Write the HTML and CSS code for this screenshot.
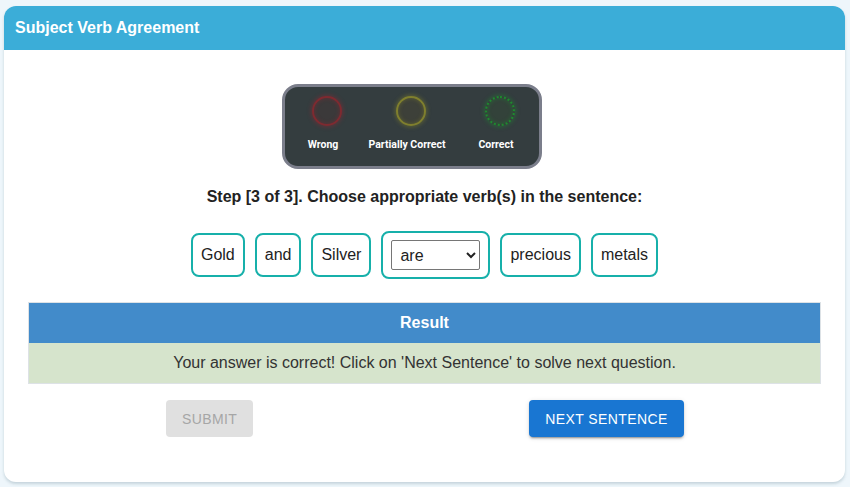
FILE: index.html
```html
<!DOCTYPE html>
<html>
<head>
<meta charset="utf-8">
<link rel="stylesheet" href="styles.css">
</head>
<body>
<div class="card">
  <div class="card-header">Subject Verb Agreement</div>
  <div class="card-body">
    <div class="lights">
      <div class="light-col col-wrong">
        <span class="lamp lamp-red"></span>
        <span class="lamp-label">Wrong</span>
      </div>
      <div class="light-col col-partial">
        <span class="lamp lamp-yellow"></span>
        <span class="lamp-label">Partially Correct</span>
      </div>
      <div class="light-col col-correct">
        <span class="lamp lamp-green"></span>
        <span class="lamp-label">Correct</span>
      </div>
    </div>
    <div class="step">Step [3 of 3]. Choose appropriate verb(s) in the sentence:</div>
    <div class="words">
      <span class="word">Gold</span>
      <span class="word">and</span>
      <span class="word">Silver</span>
      <span class="word word-select">
        <select class="verb">
          <option>are</option>
          <option>is</option>
        </select>
      </span>
      <span class="word">precious</span>
      <span class="word">metals</span>
    </div>
    <div class="result">
      <div class="result-head">Result</div>
      <div class="result-row">Your answer is correct! Click on 'Next Sentence' to solve next question.</div>
    </div>
    <div class="actions">
      <button class="btn btn-disabled" disabled>Submit</button>
      <button class="btn btn-primary">Next Sentence</button>
    </div>
  </div>
</div>
</body>
</html>
```

FILE: styles.css
```css
html, body {
  margin: 0;
  padding: 0;
}
body {
  background: #eef6fb;
  font-family: "Liberation Sans", Arial, sans-serif;
  width: 850px;
  height: 487px;
  overflow: hidden;
}
.card {
  margin: 6px 5px 0 4px;
  height: 476px;
  background: #fff;
  border-radius: 12px;
  box-shadow: 0 2px 3px rgba(120, 150, 160, 0.35);
  overflow: hidden;
  display: flex;
  flex-direction: column;
}
.card-header {
  height: 44px;
  background: #3badd8;
  color: #fff;
  font-weight: bold;
  font-size: 16px;
  line-height: 44px;
  padding-left: 11px;
}
.card-body {
  display: flex;
  flex-direction: column;
  align-items: center;
}
.lights {
  margin-top: 34px;
  align-self: flex-start;
  margin-left: 278px;
  width: 254px;
  height: 79px;
  background: #343d3f;
  border: 3px solid #7b7e8b;
  border-radius: 16px;
  display: flex;
  box-sizing: content-box;
}
.light-col {
  display: flex;
  flex-direction: column;
  align-items: center;
}
.col-wrong { width: 76px; }
.col-partial { width: 92px; }
.col-correct { width: 86px; }
.lamp {
  margin-top: 9px;
  width: 26px;
  height: 26px;
  border-radius: 50%;
  border: 2px solid;
  position: relative;
  left: 4px;
}
.lamp-red {
  border-color: #7e2a30;
  background: #3b393a;
  box-shadow: 0 0 4px 1px rgba(150, 40, 50, 0.45), inset 0 0 4px rgba(150, 40, 50, 0.45);
}
.lamp-yellow {
  border-color: #7f7f2e;
  background: #3d4039;
  box-shadow: 0 0 4px 1px rgba(140, 140, 40, 0.45), inset 0 0 4px rgba(140, 140, 40, 0.45);
}
.lamp-green {
  border-color: #1e8a2e;
  border-style: dotted;
  background: #33423a;
  box-shadow: 0 0 4px 1px rgba(30, 140, 50, 0.45), inset 0 0 4px rgba(30, 140, 50, 0.45);
}
.lamp-label {
  margin-top: 12px;
  color: #fff;
  font-family: Roboto, "Liberation Sans", sans-serif;
  font-weight: bold;
  font-size: 10.5px;
  line-height: 13px;
}
.step {
  margin-top: 19px;
  font-weight: bold;
  font-size: 16px;
  line-height: 18px;
  color: #222;
}
.words {
  margin-top: 25px;
  display: flex;
  align-items: center;
  gap: 10px;
  height: 48px;
}
.word {
  border: 2px solid #17b0aa;
  border-radius: 8px;
  padding: 11px 8px;
  font-size: 16px;
  line-height: 18px;
  color: #222;
}
.word-select {
  padding: 7px 8px;
  display: flex;
}
.verb {
  width: 89px;
  height: 30px;
  font-family: "Liberation Sans", Arial, sans-serif;
  font-size: 16px;
  color: #222;
  background: #fff;
  border: 1px solid #767676;
  border-radius: 2px;
  padding: 0 4px;
}
.result {
  margin-top: 23px;
  width: 791px;
  border: 1px solid #dde2e6;
}
.result-head {
  height: 40px;
  line-height: 40px;
  background: #428bca;
  color: #fff;
  font-weight: bold;
  font-size: 16px;
  text-align: center;
}
.result-row {
  height: 40px;
  line-height: 40px;
  background: #d6e4cc;
  color: #333;
  font-size: 16px;
  text-align: center;
}
.actions {
  margin-top: 16px;
  align-self: flex-start;
  margin-left: 162px;
  display: flex;
  gap: 276px;
}
.btn {
  font-family: "Liberation Sans", Arial, sans-serif;
  font-weight: normal;
  font-size: 14px;
  line-height: 24px;
  letter-spacing: 0.4px;
  text-transform: uppercase;
  padding: 6px 16px;
  border: none;
  border-radius: 4px;
}
.btn-disabled {
  background: #e0e0e0;
  color: #a6a6a6;
}
.btn-primary {
  background: #1976d2;
  color: #fff;
  padding: 7px 16px 6px;
  box-shadow: 0 3px 1px -2px rgba(0,0,0,0.2), 0 2px 2px 0 rgba(0,0,0,0.14), 0 1px 5px 0 rgba(0,0,0,0.12);
}
```
